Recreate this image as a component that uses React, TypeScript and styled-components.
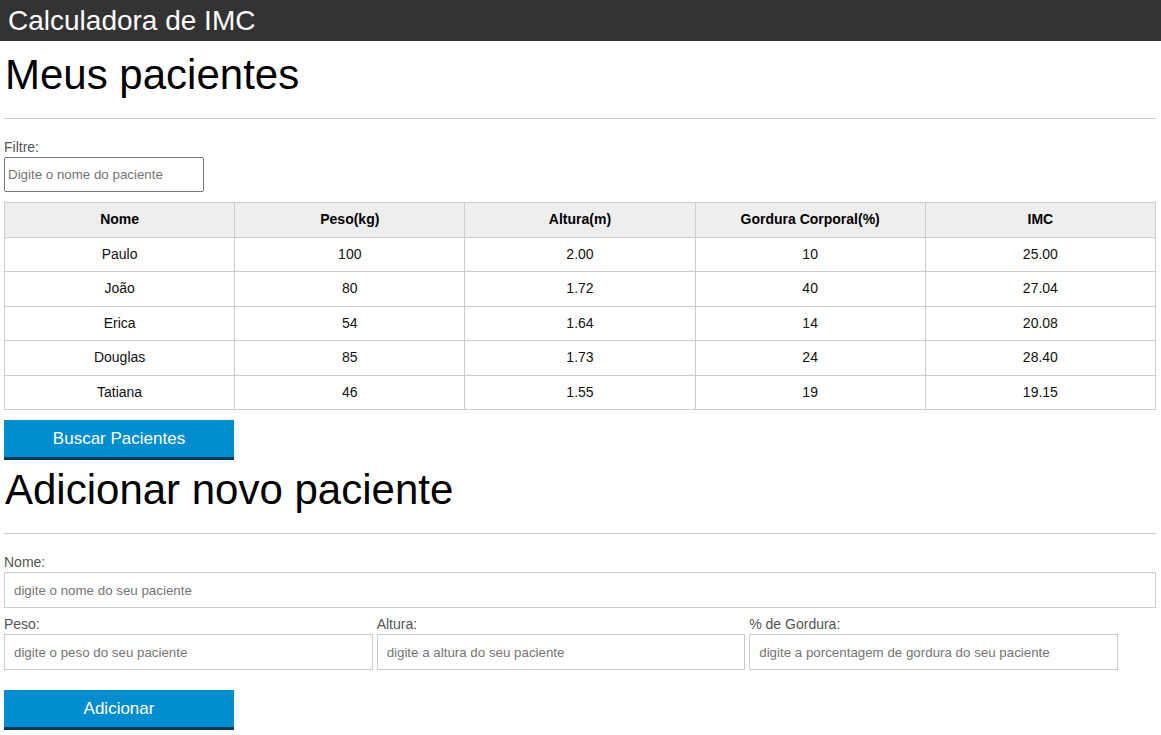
import React from "react";
import styled, { createGlobalStyle } from "styled-components";

interface Paciente {
  nome: string;
  peso: number;
  altura: string;
  gordura: number;
  imc: string;
}

const pacientes: Paciente[] = [
  { nome: "Paulo", peso: 100, altura: "2.00", gordura: 10, imc: "25.00" },
  { nome: "João", peso: 80, altura: "1.72", gordura: 40, imc: "27.04" },
  { nome: "Erica", peso: 54, altura: "1.64", gordura: 14, imc: "20.08" },
  { nome: "Douglas", peso: 85, altura: "1.73", gordura: 24, imc: "28.40" },
  { nome: "Tatiana", peso: 46, altura: "1.55", gordura: 19, imc: "19.15" },
];

const colunas = ["Nome", "Peso(kg)", "Altura(m)", "Gordura Corporal(%)", "IMC"];

const App: React.FC = () => {
  return (
    <>
      <GlobalStyle />
      <Header>
        <HeaderTitle>Calculadora de IMC</HeaderTitle>
      </Header>
      <Main>
        {/* Lista de pacientes */}
        <Section>
          <Title>Meus pacientes</Title>
          <Divider />
          <Label htmlFor="filtrar-tabela">Filtre:</Label>
          <FilterInput id="filtrar-tabela" placeholder="Digite o nome do paciente" />
          <Table>
            <thead>
              <tr>
                {colunas.map((c) => (
                  <Th key={c}>{c}</Th>
                ))}
              </tr>
            </thead>
            <tbody>
              {pacientes.map((p) => (
                <tr key={p.nome}>
                  <Td>{p.nome}</Td>
                  <Td>{p.peso}</Td>
                  <Td>{p.altura}</Td>
                  <Td>{p.gordura}</Td>
                  <Td>{p.imc}</Td>
                </tr>
              ))}
            </tbody>
          </Table>
          <Button>Buscar Pacientes</Button>
        </Section>

        {/* Formulário */}
        <Section>
          <Title $tight>Adicionar novo paciente</Title>
          <Divider />
          <Form onSubmit={(e) => e.preventDefault()}>
            <Field>
              <Label htmlFor="nome">Nome:</Label>
              <FormInput id="nome" placeholder="digite o nome do seu paciente" />
            </Field>
            <Grupo>
              <Field $third>
                <Label htmlFor="peso">Peso:</Label>
                <FormInput id="peso" placeholder="digite o peso do seu paciente" />
              </Field>
              <Field $third>
                <Label htmlFor="altura">Altura:</Label>
                <FormInput id="altura" placeholder="digite a altura do seu paciente" />
              </Field>
              <Field $third>
                <Label htmlFor="gordura">% de Gordura:</Label>
                <FormInput
                  id="gordura"
                  placeholder="digite a porcentagem de gordura do seu paciente"
                />
              </Field>
            </Grupo>
            <Button $gap>Adicionar</Button>
          </Form>
        </Section>
      </Main>
    </>
  );
};

export default App;

/** Styled Components */
const GlobalStyle = createGlobalStyle`
  * { box-sizing: border-box; }
  body {
    margin: 0;
    background: #fff;
    font-family: "Liberation Sans", Arial, sans-serif;
    color: #000;
  }
`;

const Header = styled.header`
  height: 41px;
  background-color: #333;
  padding-left: 8px;
  display: flex;
  align-items: center;
`;

const HeaderTitle = styled.h1`
  margin: 0;
  font-size: 28px;
  font-weight: 400;
  color: #fff;
  line-height: 32px;
`;

const Main = styled.main`
  padding: 0 5px 0 4px;
`;

const Section = styled.section`
  display: flex;
  flex-direction: column;
  align-items: flex-start;
`;

const Title = styled.h2<{ $tight?: boolean }>`
  margin: ${(p) => (p.$tight ? "5px" : "9px")} 0 0 1px;
  font-size: 42px;
  font-weight: 400;
  line-height: 50px;
`;

const Divider = styled.hr`
  align-self: stretch;
  margin: 18px 0 20px;
  border: none;
  border-top: 1px solid #c8c8c8;
  height: 0;
`;

const Label = styled.label`
  display: block;
  font-size: 14px;
  line-height: 16px;
  color: #555;
  margin-bottom: 2px;
`;

const FilterInput = styled.input`
  width: 200px;
  height: 35px;
  padding: 0 3px;
  border: 1px solid #767676;
  border-radius: 2px;
  font-family: inherit;
  font-size: 13.333px;
  color: #333;
  &::placeholder { color: #757575; }
`;

const Table = styled.table`
  margin-top: 10px;
  width: 100%;
  border-collapse: collapse;
  table-layout: fixed;
  font-size: 14px;
`;

const Th = styled.th`
  background-color: #eee;
  border: 1px solid #ccc;
  padding: 8px;
  line-height: 17.5px;
  font-weight: 700;
  color: #000;
`;

const Td = styled.td`
  border: 1px solid #ccc;
  padding: 8px;
  line-height: 17.5px;
  text-align: center;
  color: #111;
`;

const Button = styled.button<{ $gap?: boolean }>`
  margin-top: ${(p) => (p.$gap ? "20px" : "10px")};
  width: 230px;
  height: 40px;
  padding: 0;
  background-color: #008dcf;
  border: none;
  border-bottom: 3px solid #003a57;
  color: #fff;
  font-family: inherit;
  font-size: 17px;
  cursor: pointer;
`;

const Form = styled.form`
  align-self: stretch;
  display: flex;
  flex-direction: column;
  align-items: flex-start;
`;

const Grupo = styled.div`
  display: flex;
  gap: 4px;
  margin-top: 8px;
  align-self: stretch;
`;

const Field = styled.div<{ $third?: boolean }>`
  width: ${(p) => (p.$third ? "32%" : "100%")};
`;

const FormInput = styled.input`
  width: 100%;
  height: 36px;
  padding: 0 10px 0 9px;
  border: 1px solid #ccc;
  border-radius: 0;
  font-family: inherit;
  font-size: 13.333px;
  color: #333;
  &::placeholder { color: #757575; }
`;
